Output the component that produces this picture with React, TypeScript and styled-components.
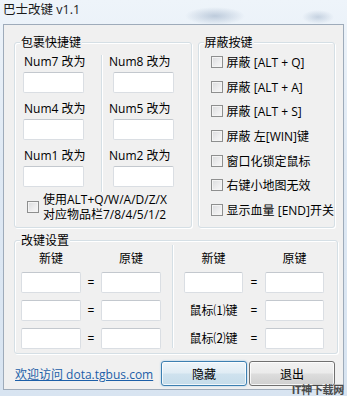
import React from 'react';
import styled, { createGlobalStyle } from 'styled-components';

const FONT = `"Open Sans", "Noto Sans CJK SC", sans-serif`;

const GlobalStyle = createGlobalStyle`
  html, body {
    margin: 0;
    padding: 0;
  }
  body {
    width: 347px;
    height: 396px;
    overflow: hidden;
    font-family: ${FONT};
    font-size: 12px;
    color: #000;
  }
`;

const Window = styled.div`
  position: relative;
  width: 347px;
  height: 396px;
  box-sizing: border-box;
  padding: 0 3px 6px 3px;
  display: flex;
  flex-direction: column;
  background:
    radial-gradient(ellipse 30px 9px at 215px 16px, rgba(150, 170, 195, 0.55), transparent),
    radial-gradient(ellipse 16px 7px at 318px 17px, rgba(150, 170, 195, 0.45), transparent),
    linear-gradient(180deg, #eef4fa 0%, #dfe9f4 40%, #d8e4f1 100%);
`;

const TitleBar = styled.div`
  height: 24px;
  flex: none;
  box-sizing: border-box;
  padding-top: 3px;
  line-height: 14px;
  font-size: 12.5px;
  color: #1a1a1a;
`;

const Client = styled.div`
  flex: 1;
  box-sizing: border-box;
  border: 1px solid #9eabba;
  background: #f0f0f0;
  padding: 17px 8px 0 10px;
  display: flex;
  flex-direction: column;
`;

const TopRow = styled.div`
  display: flex;
  gap: 6px;
`;

const GroupBox = styled.div<{ $w: number; $h: number }>`
  position: relative;
  box-sizing: border-box;
  width: ${({ $w }) => $w}px;
  height: ${({ $h }) => $h}px;
  border: 1px solid #d5dfe5;
  border-radius: 3px;
  box-shadow: inset 1px 1px 0 #fff, 1px 1px 0 #fff;
`;

const Legend = styled.span`
  position: absolute;
  top: -8px;
  left: 5px;
  padding: 0 1px;
  background: #f0f0f0;
  line-height: 15px;
  white-space: nowrap;
`;

const NumGrid = styled.div`
  margin-top: 12px;
  display: grid;
  grid-template-columns: 87px 1fr;
`;

const NumColumn = styled.div<{ $divider?: boolean; $labelPad: number; $inputPad: number }>`
  display: flex;
  flex-direction: column;
  gap: 9px;
  padding-bottom: 5px;
  border-right: ${({ $divider }) => ($divider ? '1px solid #d5dfe5' : 'none')};
  box-shadow: ${({ $divider }) => ($divider ? '1px 0 0 #fff' : 'none')};
  --label-pad: ${({ $labelPad }) => $labelPad}px;
  --input-pad: ${({ $inputPad }) => $inputPad}px;
`;

const NumCell = styled.div`
  display: flex;
  flex-direction: column;
`;

const NumLabel = styled.span`
  line-height: 14px;
  padding-left: var(--label-pad);
  white-space: nowrap;
`;

const TextBox = styled.div<{ $w?: number }>`
  box-sizing: border-box;
  width: ${({ $w }) => $w ?? 60}px;
  height: 21px;
  background: #fff;
  border: 1px solid #dadee3;
  border-top-color: #c3c8ce;
  border-radius: 2px;
`;

const NumInput = styled(TextBox)`
  margin-top: 3px;
  margin-left: var(--input-pad);
`;

const CheckRow = styled.div`
  display: flex;
  align-items: center;
  gap: 4px;
  padding: 0 0 0 12px;
  white-space: nowrap;
`;

const CheckText = styled.div`
  display: flex;
  flex-direction: column;
`;

const CheckLine = styled.div`
  line-height: 15px;
`;

const CheckBox = styled.span`
  flex: none;
  box-sizing: border-box;
  width: 12px;
  height: 12px;
  border: 1px solid #8e8f8f;
  background: linear-gradient(135deg, #dadbdd 0%, #eeeeef 60%, #f7f7f7 100%);
  box-shadow: inset 0 0 0 1px #f4f4f4;
`;

const BlockList = styled.div`
  padding: 7px 0 0 12px;
  display: flex;
  flex-direction: column;
  overflow: hidden;
`;

const BlockRow = styled.div`
  height: 24.6px;
  display: flex;
  align-items: center;
  gap: 4px;
  white-space: nowrap;
`;

const RemapGroup = styled(GroupBox)`
  margin-top: 12px;
  display: flex;
`;

const Half = styled.div<{ $pad: number; $cols: string }>`
  padding: 10px 0 0 ${({ $pad }) => $pad}px;
  display: grid;
  grid-template-columns: ${({ $cols }) => $cols};
  grid-auto-rows: 21px;
  grid-template-rows: 14px;
  row-gap: 7px;
  align-items: center;
  align-content: start;
`;

const LeftHalf = styled(Half)`
  width: 157px;
  box-sizing: border-box;
`;

const RightHalf = styled(Half)`
  flex: 1;
`;

const Divider = styled.div`
  width: 1px;
  margin: 4px 0 5px;
  background: #d5dfe5;
  box-shadow: 1px 0 0 #fff;
`;

const ColHead = styled.span`
  text-align: center;
  line-height: 14px;
  margin-bottom: -1px;
`;

const Equals = styled.span`
  text-align: center;
  line-height: 14px;
`;

const MouseLabel = styled.span`
  text-align: center;
  line-height: 14px;
  white-space: nowrap;
`;

const Footer = styled.div`
  margin-top: 7px;
  display: flex;
  align-items: center;
  gap: 2px;
`;

const Link = styled.a`
  flex: 1;
  padding-left: 1px;
  color: #1c5fa8;
  text-decoration: underline;
  line-height: 14px;
  margin-top: 2px;
`;

const Button = styled.button<{ $default?: boolean }>`
  width: 86px;
  height: 25px;
  padding: 0;
  font-family: ${FONT};
  font-size: 12px;
  color: #000;
  border-radius: 3px;
  border: 1px solid ${({ $default }) => ($default ? '#3c7fb1' : '#707070')};
  background: ${({ $default }) =>
    $default
      ? 'linear-gradient(180deg, #eef5fa 0%, #e0ecf4 48%, #cfe2ee 52%, #c6dcea 100%)'
      : 'linear-gradient(180deg, #f2f2f2 0%, #ebebeb 48%, #dddddd 52%, #cfcfcf 100%)'};
  box-shadow: ${({ $default }) =>
    $default
      ? 'inset 0 0 0 1px rgba(255,255,255,0.75), 0 0 2px rgba(80,160,220,0.6)'
      : 'inset 0 0 0 1px rgba(255,255,255,0.8)'};
`;

const Watermark = styled.span`
  position: absolute;
  right: 3px;
  bottom: 0;
  font-size: 11px;
  font-weight: bold;
  letter-spacing: -0.3px;
  color: #4a4a4a;
  line-height: 12px;
`;

const numCols = [
  { labels: ['Num7 改为', 'Num4 改为', 'Num1 改为'], labelPad: 9, inputPad: 8, divider: true },
  { labels: ['Num8 改为', 'Num5 改为', 'Num2 改为'], labelPad: 7, inputPad: 11, divider: false },
];

const blockItems = [
  '屏蔽 [ALT + Q]',
  '屏蔽 [ALT + A]',
  '屏蔽 [ALT + S]',
  '屏蔽 左[WIN]键',
  '窗口化锁定鼠标',
  '右键小地图无效',
  '显示血量 [END]开关',
];

export default function App() {
  return (
    <>
      <GlobalStyle />
      <Window>
        <TitleBar>巴士改键 v1.1</TitleBar>
        <Client>
          <TopRow>
            <GroupBox $w={180} $h={186}>
              <Legend>包裹快捷键</Legend>
              <NumGrid>
                {numCols.map((col, i) => (
                  <NumColumn key={i} $divider={col.divider} $labelPad={col.labelPad} $inputPad={col.inputPad}>
                    {col.labels.map((l) => (
                      <NumCell key={l}>
                        <NumLabel>{l}</NumLabel>
                        <NumInput $w={61} />
                      </NumCell>
                    ))}
                  </NumColumn>
                ))}
              </NumGrid>
              <CheckRow>
                <CheckBox />
                <CheckText>
                  <CheckLine>使用ALT+Q/W/A/D/Z/X</CheckLine>
                  <CheckLine>对应物品栏7/8/4/5/1/2</CheckLine>
                </CheckText>
              </CheckRow>
            </GroupBox>
            <GroupBox $w={138} $h={186}>
              <Legend>屏蔽按键</Legend>
              <BlockList>
                {blockItems.map((t) => (
                  <BlockRow key={t}>
                    <CheckBox />
                    <span>{t}</span>
                  </BlockRow>
                ))}
              </BlockList>
            </GroupBox>
          </TopRow>
          <RemapGroup $w={324} $h={114}>
            <Legend>改键设置</Legend>
            <LeftHalf $pad={6} $cols="60px 20px 60px">
              <ColHead>新键</ColHead>
              <span />
              <ColHead>原键</ColHead>
              {[0, 1, 2].map((r) => (
                <React.Fragment key={r}>
                  <TextBox />
                  <Equals>=</Equals>
                  <TextBox />
                </React.Fragment>
              ))}
            </LeftHalf>
            <Divider />
            <RightHalf $pad={11} $cols="59px 22px 59px">
              <ColHead>新键</ColHead>
              <span />
              <ColHead>原键</ColHead>
              <TextBox $w={59} />
              <Equals>=</Equals>
              <TextBox $w={59} />
              <MouseLabel>鼠标⑴键</MouseLabel>
              <Equals>=</Equals>
              <TextBox $w={59} />
              <MouseLabel>鼠标⑵键</MouseLabel>
              <Equals>=</Equals>
              <TextBox $w={59} />
            </RightHalf>
          </RemapGroup>
          <Footer>
            <Link href="#">欢迎访问 dota.tgbus.com</Link>
            <Button $default>隐藏</Button>
            <Button>退出</Button>
          </Footer>
        </Client>
        <Watermark>IT神下载网</Watermark>
      </Window>
    </>
  );
}
